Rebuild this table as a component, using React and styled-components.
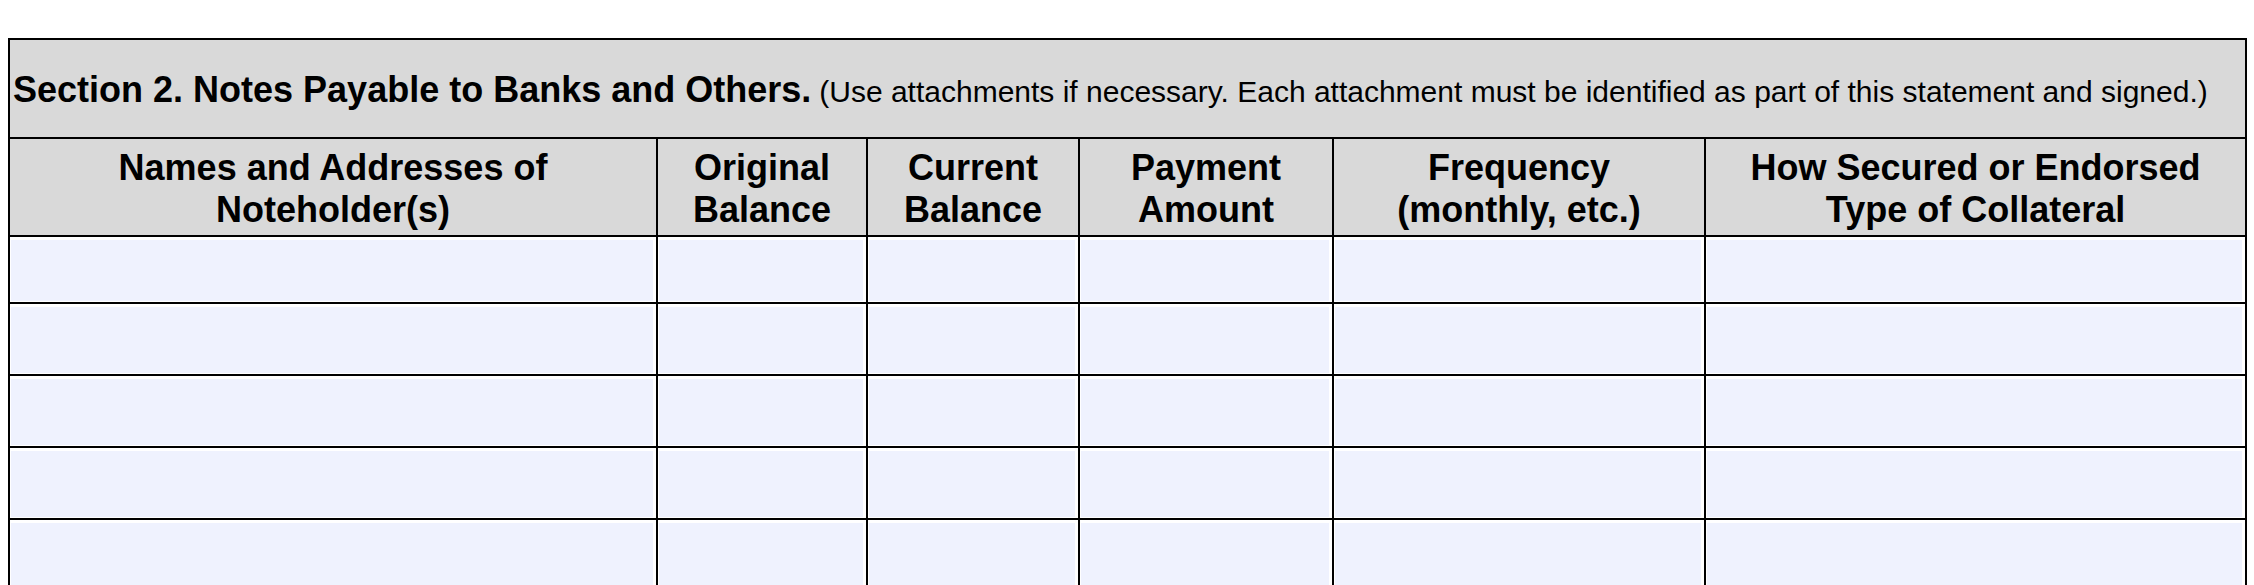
import React from "react";
import styled, { createGlobalStyle } from "styled-components";

const GlobalStyle = createGlobalStyle`
  body {
    margin: 0;
    background: #fff;
    font-family: "Liberation Sans", Arial, sans-serif;
  }
`;

const Page = styled.div`
  padding: 38px 9px 0 8px;
`;

const Table = styled.table`
  width: 2237px;
  border-collapse: collapse;
  table-layout: fixed;
  border: 2px solid #000;
  color: #000;
`;

const TitleCell = styled.th`
  height: 95px;
  padding: 2px 0 0 3px;
  background: #d9d9d9;
  border: 2px solid #000;
  text-align: left;
  font-weight: normal;
  white-space: nowrap;
`;

const SectionName = styled.span`
  font-size: 36px;
  font-weight: bold;
`;

const SectionNote = styled.span`
  margin-left: 8px;
  font-size: 30px;
`;

const HeadCell = styled.th`
  height: 92px;
  padding: 4px 0 0;
  background: #d9d9d9;
  border: 2px solid #000;
  font-size: 36px;
  font-weight: bold;
  line-height: 42px;
  text-align: center;
  vertical-align: middle;
`;

const Cell = styled.td`
  height: ${(p) => p.$h}px;
  padding: 3px 3px 1px 1px;
  border: 2px solid #000;
  vertical-align: top;
`;

const Field = styled.div`
  height: 100%;
  background: #eff2fe;
`;

const columns = [
  { w: 648, label: ["Names and Addresses of", "Noteholder(s)"] },
  { w: 210, label: ["Original", "Balance"] },
  { w: 212, label: ["Current", "Balance"] },
  { w: 254, label: ["Payment", "Amount"] },
  { w: 372, label: ["Frequency", "(monthly, etc.)"] },
  { w: 541, label: ["How Secured or Endorsed", "Type of Collateral"] },
];

const rows = [61, 66, 66, 66, 66];

export default function App() {
  return (
    <Page>
      <GlobalStyle />
      <Table>
        <colgroup>
          {columns.map((c, i) => (
            <col key={i} style={{ width: c.w }} />
          ))}
        </colgroup>
        <thead>
          <tr>
            <TitleCell colSpan={6}>
              <SectionName>Section 2. Notes Payable to Banks and Others.</SectionName>
              <SectionNote>
                (Use attachments if necessary. Each attachment must be identified as part of this
                statement and signed.)
              </SectionNote>
            </TitleCell>
          </tr>
          <tr>
            {columns.map((c, i) => (
              <HeadCell key={i}>
                {c.label[0]}
                <br />
                {c.label[1]}
              </HeadCell>
            ))}
          </tr>
        </thead>
        <tbody>
          {rows.map((h, r) => (
            <tr key={r}>
              {columns.map((c, i) => (
                <Cell key={i} $h={h}>
                  <Field />
                </Cell>
              ))}
            </tr>
          ))}
        </tbody>
      </Table>
    </Page>
  );
}
